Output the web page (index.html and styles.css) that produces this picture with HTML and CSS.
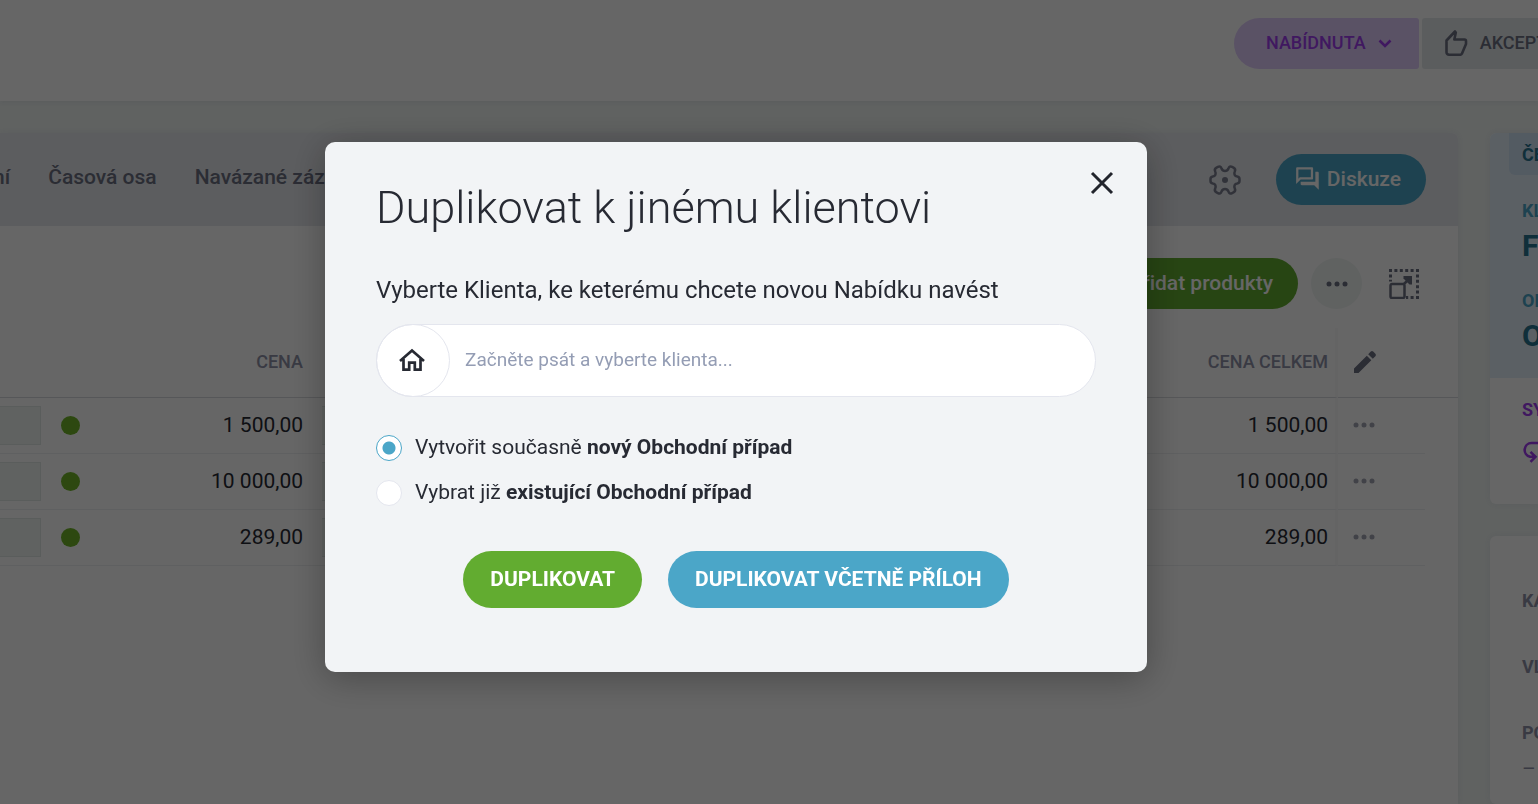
FILE: index.html
```html
<!DOCTYPE html>
<html lang="cs">
<head>
  <meta charset="UTF-8">
  <meta name="viewport" content="width=device-width, initial-scale=1.0">
  <title>Nabídka</title>
  <link rel="stylesheet" href="styles.css">
</head>
<body>
  <header class="topbar">
    <div class="status">
      <button class="status-btn active" type="button">
        NABÍDNUTA
        <svg width="14" height="10" viewBox="0 0 14 10"><path d="M1.500 2.500L7 8l5.500-5.500" fill="none" stroke="currentColor" stroke-width="2.600"/></svg>
      </button>
      <button class="status-btn" type="button">
        <svg width="24" height="28" viewBox="0 0 24 28"><path d="M2.500 11.500L11 2.500l.8 1-1.500 7H20.500a1.500 1.500 0 0 1 1.500 1.500v3l-4 9.500a2 2 0 0 1-1.500 1.200H5a2.500 2.500 0 0 1-2.500-2.500z" fill="none" stroke="currentColor" stroke-width="2.6" stroke-linejoin="round"/></svg>
        AKCEPTOVÁNA
      </button>
    </div>
  </header>

  <div class="layout">
    <main class="panel">
      <div class="panel-head">
        <nav class="tabs">
          <a href="#">ní</a>
          <a href="#">Časová osa</a>
          <a href="#">Navázané záznamy</a>
        </nav>
        <button class="icon-btn" type="button" aria-label="Nastavení">
          <svg width="32" height="32" viewBox="0 0 32 32"><path d="M12.500 4.500C13.300 6.300 14.500 7 16 7s2.700-.7 3.500-2.500C20 2.500 21.500 2 23 2.800l1.800 1.100c1.500.9 1.700 2.100 1 3.600-1 2-.3 4.800 2.400 5 1.600.2 2.300 1 2.300 2.500v2c0 1.500-.7 2.300-2.300 2.500-2.700.2-3.400 3-2.400 5 .7 1.500.5 2.700-1 3.600L23 29.200c-1.500.8-3 .3-3.500-1.700C18.700 25.700 17.500 25 16 25s-2.700.7-3.500 2.500c-.5 2-2 2.500-3.500 1.700l-1.800-1.100c-1.500-.9-1.700-2.100-1-3.600 1-2 .3-4.800-2.400-5-1.600-.2-2.300-1-2.300-2.500v-2c0-1.500.7-2.300 2.300-2.500 2.700-.2 3.400-3 2.400-5-.7-1.500-.5-2.700 1-3.600L9 2.800c1.500-.8 3-.3 3.500 1.700z" fill="none" stroke="currentColor" stroke-width="2.500" stroke-linejoin="round"/><circle cx="16" cy="16" r="3" fill="currentColor"/></svg>
        </button>
        <button class="btn btn-blue" type="button">
          <svg width="26" height="26" viewBox="1 1 23 23"><path d="M15 4v7H5.170L4 12.170V4h11m1-2H3c-.55 0-1 .45-1 1v14l4-4h10c.55 0 1-.45 1-1V3c0-.55-.45-1-1-1zm5 4h-2v9H6v2c0 .55.45 1 1 1h11l4 4V7c0-.55-.45-1-1-1z" fill="currentColor"/></svg>
          Diskuze
        </button>
      </div>

      <div class="toolbar">
        <button class="btn btn-green" type="button">Přidat produkty</button>
        <button class="round-btn" type="button" aria-label="Další akce">
          <svg width="22" height="6" viewBox="0 0 22 6"><g fill="currentColor"><circle cx="3" cy="3" r="2.500"/><circle cx="11" cy="3" r="2.500"/><circle cx="19" cy="3" r="2.500"/></g></svg>
        </button>
        <button class="icon-btn dark" type="button" aria-label="Zvětšit">
          <svg width="30" height="30" viewBox="0 0 30 30"><g fill="none" stroke="currentColor"><path d="M0 1.500h30M28.500 5.400V30M1.500 5.400v7M24.600 28.500H17" stroke-width="3" stroke-dasharray="3 2.400"/><path d="M3 15h11a1.500 1.500 0 0 1 1.500 1.500v11a1.500 1.500 0 0 1-1.500 1.500H3a1.500 1.500 0 0 1-1.500-1.500v-11A1.500 1.500 0 0 1 3 15zM15 15l6.500-6.500" stroke-width="2.500"/></g><path d="M14.500 7H23v8.500h-2.500L14.500 9.500z" fill="currentColor"/></svg>
        </button>
      </div>

      <table class="items">
        <thead>
          <tr>
            <th class="col-qty"></th>
            <th class="col-dot"></th>
            <th class="col-price">CENA</th>
            <th class="col-discount"></th>
            <th class="col-total">CENA CELKEM</th>
            <th class="col-edit">
              <svg width="24" height="24" viewBox="0 0 24 24"><path d="M1 18.500V23h4.500L18.300 10.200l-4.500-4.500zM22.400 6.200a1.700 1.700 0 0 0 0-2.400l-2.200-2.200a1.700 1.700 0 0 0-2.400 0l-2.600 2.600 4.600 4.600z" fill="currentColor"/></svg>
            </th>
            <th class="col-end"></th>
          </tr>
        </thead>
        <tbody>
          <tr>
            <td class="col-qty"><input type="text" aria-label="Množství"></td>
            <td class="col-dot"><span class="dot"></span></td>
            <td class="col-price">1 500,00</td>
            <td class="col-discount"><input type="text" aria-label="Sleva"></td>
            <td class="col-total">1 500,00</td>
            <td class="col-edit"><svg width="22" height="6" viewBox="0 0 22 6"><g fill="currentColor"><circle cx="3" cy="3" r="2.500"/><circle cx="11" cy="3" r="2.500"/><circle cx="19" cy="3" r="2.500"/></g></svg></td>
            <td class="col-end"></td>
          </tr>
          <tr>
            <td class="col-qty"><input type="text" aria-label="Množství"></td>
            <td class="col-dot"><span class="dot"></span></td>
            <td class="col-price">10 000,00</td>
            <td class="col-discount"><input type="text" aria-label="Sleva"></td>
            <td class="col-total">10 000,00</td>
            <td class="col-edit"><svg width="22" height="6" viewBox="0 0 22 6"><g fill="currentColor"><circle cx="3" cy="3" r="2.500"/><circle cx="11" cy="3" r="2.500"/><circle cx="19" cy="3" r="2.500"/></g></svg></td>
            <td class="col-end"></td>
          </tr>
          <tr>
            <td class="col-qty"><input type="text" aria-label="Množství"></td>
            <td class="col-dot"><span class="dot"></span></td>
            <td class="col-price">289,00</td>
            <td class="col-discount"><input type="text" aria-label="Sleva"></td>
            <td class="col-total">289,00</td>
            <td class="col-edit"><svg width="22" height="6" viewBox="0 0 22 6"><g fill="currentColor"><circle cx="3" cy="3" r="2.500"/><circle cx="11" cy="3" r="2.500"/><circle cx="19" cy="3" r="2.500"/></g></svg></td>
            <td class="col-end"></td>
          </tr>
        </tbody>
      </table>
    </main>

    <aside class="sidebar">
      <section class="card">
        <div class="card-client">
          <span class="tag">ČEKÁ</span>
          <h3>KLIENT</h3>
          <p>Firma</p>
          <h3>OBCHOD</h3>
          <p>Obchod</p>
        </div>
        <div class="card-sync">
          <h3>SYNC</h3>
          <svg width="30" height="24" viewBox="0 0 30 24"><path d="M30 3H9.500a7 7 0 0 0-1.500 13.800h4.500M8.500 11.800l5 5-5 5" fill="none" stroke="currentColor" stroke-width="2.600"/></svg>
        </div>
      </section>
      <section class="card card-info">
        <h3>KATEGORIE</h3>
        <h3>VLASTNÍK</h3>
        <h3>POPIS</h3>
        <p>–</p>
      </section>
    </aside>
  </div>

  <div class="overlay">
    <form class="modal" role="dialog" aria-labelledby="modal-title">
      <button class="close" type="button" aria-label="Zavřít">
        <svg width="24" height="24" viewBox="0 0 24 24"><path d="M2 2l20 20M22 2L2 22" fill="none" stroke="currentColor" stroke-width="3"/></svg>
      </button>
      <h1 id="modal-title">Duplikovat k jinému klientovi</h1>
      <label class="lead" for="client">Vyberte Klienta, ke keterému chcete novou Nabídku navést</label>
      <div class="search">
        <span class="search-icon">
          <svg width="28" height="24" viewBox="0 0 28 24"><path d="M2 13L14 2.500 26 13M5.500 11v10.700h5.700v-7h5.600v7h5.700V11" fill="none" stroke="currentColor" stroke-width="2.700"/></svg>
        </span>
        <input type="text" id="client" placeholder="Začněte psát a vyberte klienta...">
      </div>
      <div class="options">
        <label><input type="radio" name="deal" checked><span>Vytvořit současně <b>nový Obchodní případ</b></span></label>
        <label><input type="radio" name="deal"><span>Vybrat již <b>existující Obchodní případ</b></span></label>
      </div>
      <div class="actions">
        <button class="action green" type="button">DUPLIKOVAT</button>
        <button class="action blue" type="button">DUPLIKOVAT VČETNĚ PŘÍLOH</button>
      </div>
    </form>
  </div>
</body>
</html>
```
FILE: styles.css
```css
:root {
  --green: #62ac30;
  --blue: #4ba6c8;
  --purple: #a03df0;
  --bg: #f0f5f3;
  --head: #e6e8ed;
  --line: #e6e8ec;
  --text: #272a33;
  --muted: #8e92a8;
}

* {
  box-sizing: border-box;
}

body {
  font-family: Roboto, sans-serif;
  background-color: var(--bg);
  color: var(--text);
  margin: 0;
  height: 100vh;
  overflow: hidden;
  display: flex;
  flex-direction: column;
}

h1, h3, p {
  margin: 0;
}

button {
  font-family: inherit;
  border: none;
  cursor: pointer;
}

svg {
  display: block;
  flex-shrink: 0;
}

.topbar {
  display: flex;
  justify-content: flex-end;
  padding: 18px 0 32px;
  background-color: #fff;
  box-shadow: 0 3px 4px rgba(60, 60, 120, 0.06);
}

.status {
  display: flex;
  gap: 3px;
  width: 304px;
  overflow: hidden;
}

.status-btn {
  display: flex;
  align-items: center;
  flex-shrink: 0;
  gap: 12px;
  height: 51px;
  padding: 0 22px 2px;
  border-radius: 3px;
  background-color: #e4e8eb;
  color: #6d7083;
  font-size: 18px;
  font-weight: 500;
}

.status-btn.active {
  padding: 0 27px 2px 32px;
  border-radius: 26px 3px 3px 26px;
  background-color: #e1cdfc;
  color: var(--purple);
}

.layout {
  flex: 1;
  display: grid;
  grid-template-columns: minmax(0, 1fr) 48px;
  gap: 32px;
  padding-top: 32px;
}

.panel {
  background-color: #fff;
  border-radius: 0 6px 0 0;
  box-shadow: 0 0 8px rgba(60, 60, 120, 0.07);
}

.panel-head {
  display: flex;
  align-items: center;
  gap: 35px;
  height: 93px;
  padding-right: 32px;
  background-color: var(--head);
  border-radius: 0 6px 0 0;
}

.tabs {
  display: flex;
  flex: 1;
  gap: 38px;
  margin-left: -7px;
  padding-bottom: 6px;
}

.tabs a {
  color: #6d7083;
  font-size: 21px;
  font-weight: 500;
  text-decoration: none;
  white-space: nowrap;
}

.icon-btn {
  padding: 0;
  background: none;
  color: #7b7e90;
}

.icon-btn.dark {
  color: #6d7083;
}

.btn {
  display: flex;
  align-items: center;
  gap: 6px;
  height: 51px;
  padding: 0 25px 2px;
  border-radius: 26px;
  color: #fff;
  font-size: 21px;
  font-weight: 500;
}

.btn-blue {
  padding-left: 19px;
  background-color: var(--blue);
}

.btn-green {
  background-color: var(--green);
}

.toolbar {
  display: flex;
  justify-content: flex-end;
  align-items: center;
  gap: 13px;
  padding: 32px 39px 19px;
}

.toolbar .icon-btn {
  margin-left: 14px;
}

.round-btn {
  display: flex;
  align-items: center;
  justify-content: center;
  width: 51px;
  height: 51px;
  padding: 0;
  border-radius: 50%;
  background-color: var(--bg);
  color: #6d7083;
}

.items {
  width: 100%;
  table-layout: fixed;
  border-collapse: separate;
  border-spacing: 0;
}

.items th {
  height: 70px;
  padding: 0 0 2px;
  border-bottom: 1px solid #d8dade;
  color: var(--muted);
  font-size: 18px;
  font-weight: 500;
}

.items td {
  height: 56px;
  padding: 0;
  border-bottom: 1px solid #eef0f2;
  font-size: 21px;
}

.items td.col-end {
  border-bottom: none;
}

.items input {
  display: block;
  width: 100%;
  height: 39px;
  border: 1px solid #e0e8e6;
  border-left: none;
  background-color: var(--bg);
}

.items .col-qty {
  width: 41px;
}

.items .col-dot {
  width: 60px;
  padding-left: 20px;
}

.items .col-price {
  width: 202px;
  padding-bottom: 2px;
  text-align: right;
}

.items .col-discount {
  padding-left: 19px;
}

.items .col-total {
  width: 200px;
  padding: 0 7px 2px 0;
  border-right: 3px solid #f9f9fb;
  text-align: right;
}

.items .col-edit {
  width: 87px;
  padding: 0 0 2px 15px;
  color: #a4a6b4;
}

.items th.col-edit {
  color: #6d7083;
}

.items .col-end {
  width: 33px;
}

.dot {
  display: block;
  width: 19px;
  height: 19px;
  border-radius: 50%;
  background-color: #70b52a;
}

.sidebar {
  display: flex;
  flex-direction: column;
  gap: 32px;
  min-width: 0;
}

.card {
  overflow: hidden;
  background-color: #fff;
  border-radius: 6px 0 0 6px;
  box-shadow: 0 0 8px rgba(60, 60, 120, 0.07);
}

.card h3 {
  font-size: 18px;
  font-weight: 700;
  line-height: 20px;
}

.card-client {
  height: 245px;
  padding-left: 32px;
  background-color: #e4f1fa;
  color: #2a7591;
}

.card-client h3 {
  color: var(--blue);
}

.card-client p {
  padding: 8px 0 28px;
  font-size: 30px;
  font-weight: 700;
  line-height: 34px;
}

.tag {
  display: block;
  width: 100px;
  margin: 0 0 26px -13px;
  padding: 12px 13px 10px;
  border-radius: 0 0 0 6px;
  background-color: #d0e3f6;
  font-size: 18px;
  font-weight: 700;
  line-height: 20px;
}

.card-sync {
  padding: 22px 0 40px 32px;
  color: var(--purple);
}

.card-sync svg {
  margin-top: 20px;
}

.card-info {
  flex: 1;
  padding: 55px 0 0 32px;
  color: var(--muted);
}

.card-info h3 {
  margin-bottom: 46px;
}

.card-info h3:last-of-type {
  margin-bottom: 14px;
}

.card-info p {
  font-size: 21px;
}

.overlay {
  position: fixed;
  inset: 0;
  display: flex;
  justify-content: center;
  align-items: flex-start;
  padding: 142px 66px 0 0;
  background-color: rgba(0, 0, 0, 0.6);
}

.modal {
  position: relative;
  width: 822px;
  padding: 38px 51px 64px;
  border-radius: 10px;
  background-color: #f2f4f6;
  box-shadow: 0 6px 36px rgba(0, 0, 0, 0.3);
}

.close {
  position: absolute;
  top: 29px;
  right: 33px;
  padding: 0;
  background: none;
  color: #22242c;
}

.modal h1 {
  margin-bottom: 38px;
  font-size: 45px;
  font-weight: 300;
  line-height: 56px;
}

.lead {
  display: block;
  margin-bottom: 18px;
  font-size: 24px;
  line-height: 32px;
}

.search {
  display: flex;
  height: 73px;
  border: 1px solid #e4e6ee;
  border-radius: 37px;
  background-color: #fff;
}

.search-icon {
  display: flex;
  align-items: center;
  justify-content: center;
  width: 74px;
  margin: -1px 0 -1px -1px;
  padding: 0 2px 2px 0;
  border: 1px solid #e4e6ee;
  border-radius: 37px;
}

.search input {
  flex: 1;
  padding: 0 15px 2px;
  border: none;
  border-radius: 37px;
  outline: none;
  background: none;
  color: var(--text);
  font-family: inherit;
  font-size: 19px;
}

.search input::placeholder {
  color: #949db4;
}

.options {
  display: flex;
  flex-direction: column;
  gap: 19px;
  margin: 38px 0 45px;
}

.options label {
  display: flex;
  gap: 13px;
  font-size: 21px;
  line-height: 24px;
}

.options b {
  font-weight: 700;
}

.options input {
  appearance: none;
  width: 26px;
  height: 26px;
  margin: 0;
  border: 1px solid #e4e6ee;
  border-radius: 50%;
  background-color: #fff;
}

.options input:checked {
  border-color: var(--blue);
  background-image: radial-gradient(circle, var(--blue) 6px, transparent 7px);
}

.actions {
  display: flex;
  justify-content: center;
  gap: 26px;
}

.action {
  height: 57px;
  padding: 0 27px 2px;
  border-radius: 29px;
  color: #fff;
  font-size: 21px;
  font-weight: 700;
}

.action.green {
  background-color: var(--green);
}

.action.blue {
  background-color: var(--blue);
}
```
